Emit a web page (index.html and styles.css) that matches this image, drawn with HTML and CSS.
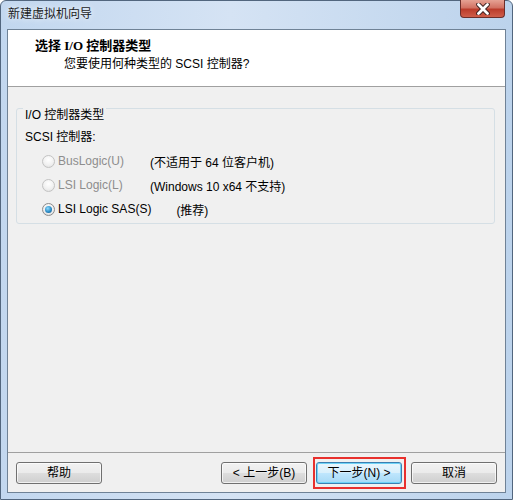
FILE: index.html
```html
<!DOCTYPE html>
<html>
	<head>
		<meta content="text/html;charset=utf-8" http-equiv="Content-Type" />
		<title>新建虚拟机向导</title>
		<link rel="stylesheet" href="styles.css">
	</head>
	<body>
		<div class="window">
			<div class="titlebar">
				<span class="caption">新建虚拟机向导</span>
				<div class="close-button">
					<svg width="20" height="12" viewBox="0 0 20 12">
						<path d="M5.5 1.5 L14.5 10.5 M14.5 1.5 L5.5 10.5" stroke="#3b1f1f" stroke-width="4.6" stroke-linecap="round" fill="none" />
						<path d="M5.5 1.5 L14.5 10.5 M14.5 1.5 L5.5 10.5" stroke="#ffffff" stroke-width="2.8" stroke-linecap="round" fill="none" />
					</svg>
				</div>
			</div>
			<div class="client">
				<div class="header">
					<div class="header-title">选择 I/O 控制器类型</div>
					<div class="header-sub">您要使用何种类型的 SCSI 控制器?</div>
				</div>
				<div class="content">
					<div class="group">
						<div class="group-title">I/O 控制器类型</div>
						<div class="field-label">SCSI 控制器:</div>
						<div class="choice disabled">
							<span class="radio"></span>
							<span class="choice-label">BusLogic(U)</span>
							<span class="note">(不适用于 64 位客户机)</span>
						</div>
						<div class="choice disabled">
							<span class="radio"></span>
							<span class="choice-label">LSI Logic(L)</span>
							<span class="note">(Windows 10 x64 不支持)</span>
						</div>
						<div class="choice">
							<span class="radio checked"></span>
							<span class="choice-label">LSI Logic SAS(S)</span>
							<span class="note note-rec">(推荐)</span>
						</div>
					</div>
				</div>
				<div class="footer">
					<div class="button">帮助</div>
					<div class="spacer"></div>
					<div class="button">&lt; 上一步(B)</div>
					<div class="button default">
						下一步(N) &gt;
						<div class="mark"></div>
					</div>
					<div class="button">取消</div>
				</div>
			</div>
		</div>
	</body>
</html>
```

FILE: styles.css
```css
body {
	margin: 0px;
	background-color: #ffffff;
	font-family: "Liberation Sans", "Noto Sans CJK SC", sans-serif;
	font-size: 12px;
	color: #000000;
}

.window {
	box-sizing: border-box;
	width: 513px;
	height: 500px;
	display: flex;
	flex-direction: column;
	padding: 0px 6px 6px 6px;
	border: 1px solid #52667e;
	border-radius: 6px 6px 0px 0px;
	background: linear-gradient(to right, #c2d7ef 0%, #d5e3f4 45%, #bcd3ec 100%);
}

.titlebar {
	height: 28px;
	display: flex;
	align-items: flex-start;
}

.caption {
	margin-left: 1px;
	line-height: 27px;
	color: #1b1b1b;
	text-shadow: 0px 0px 6px #ffffff;
}

.close-button {
	margin-left: auto;
	margin-top: -1px;
	margin-right: 1px;
	width: 45px;
	height: 18px;
	box-sizing: border-box;
	border: 1px solid #6c2e2a;
	border-top: none;
	border-radius: 0px 0px 4px 4px;
	background: linear-gradient(to bottom, #e6a294 0%, #d27263 45%, #bb3c2b 55%, #cf5e4a 100%);
	display: flex;
	align-items: center;
	justify-content: center;
}

.client {
	flex: 1;
	display: flex;
	flex-direction: column;
	border: 1px solid #6f8296;
	background-color: #f0f0f0;
}

.header {
	height: 48px;
	padding: 8px 0px 0px 27px;
	background-color: #ffffff;
	border-bottom: 1px solid #a0a0a0;
}

.header-title {
	line-height: 16px;
	font-weight: bold;
	font-family: "Liberation Serif", "Noto Sans CJK SC", serif;
	font-size: 13px;
}

.header-sub {
	line-height: 16px;
	margin-top: 2px;
	margin-left: 29px;
}

.content {
	flex: 1;
	padding: 21px 10px 0px 8px;
}

.group {
	height: 114px;
	border: 1px solid #d5dfe5;
	border-radius: 3px;
}

.group-title {
	width: fit-content;
	margin: -1px 0px 0px 6px;
	padding: 0px 2px;
	line-height: 14px;
	background-color: #f0f0f0;
}

.field-label {
	margin: 8px 0px 0px 8px;
	line-height: 14px;
}

.choice {
	height: 24px;
	display: flex;
	align-items: center;
	padding-left: 25px;
	white-space: nowrap;
}

.field-label + .choice {
	margin-top: 5px;
}

.choice-label {
	flex-shrink: 0;
	min-width: 92px;
	margin-left: 3px;
}

.disabled .choice-label {
	color: #8d8d8d;
}

.note-rec {
	margin-left: 25px;
}

.radio {
	flex-shrink: 0;
	box-sizing: border-box;
	width: 13px;
	height: 13px;
	border-radius: 50%;
	border: 1px solid #c3c3c3;
	background: radial-gradient(circle at 50% 35%, #ffffff 0%, #f1f1f1 55%, #dcdcdc 100%);
	display: flex;
	align-items: center;
	justify-content: center;
}

.radio.checked {
	border-color: #8b8b8b;
	background: radial-gradient(circle at 50% 35%, #ffffff 0%, #ececec 60%, #d0d0d0 100%);
}

.radio.checked::after {
	content: "";
	width: 7px;
	height: 7px;
	border-radius: 50%;
	background: radial-gradient(circle at 40% 35%, #8fdcff 0%, #2c8cc6 55%, #0f4f7e 100%);
}

.footer {
	display: flex;
	gap: 9px;
	padding: 9px 8px 8px 8px;
	border-top: 1px solid #a0a0a0;
}

.spacer {
	flex: 1;
}

.button {
	position: relative;
	box-sizing: border-box;
	width: 86px;
	height: 22px;
	line-height: 20px;
	text-align: center;
	border: 1px solid #707070;
	border-radius: 3px;
	background: linear-gradient(to bottom, #f2f2f2 0%, #ebebeb 48%, #dddddd 52%, #cfcfcf 100%);
	box-shadow: inset 0px 0px 0px 1px rgba(255, 255, 255, 0.7);
}

.button.default {
	border-color: #3c7fb1;
	background: linear-gradient(to bottom, #eaf6fd 0%, #d9f0fc 48%, #bee6fd 52%, #a7d9f5 100%);
	box-shadow: inset 0px 0px 0px 1px #6fd3f7;
}

/* red frame drawn around the next button */
.mark {
	position: absolute;
	top: -6px;
	left: -4px;
	right: -5px;
	bottom: -6px;
	border: 2px solid #e8302d;
}
```
